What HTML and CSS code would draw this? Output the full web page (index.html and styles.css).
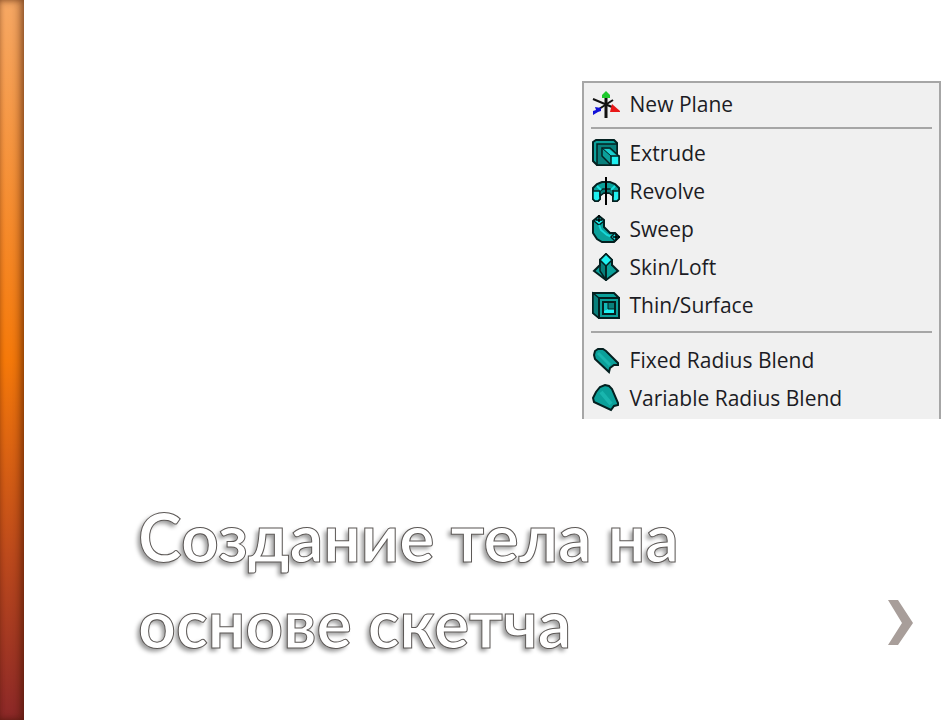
FILE: index.html
```html
<!DOCTYPE html>
<html lang="ru">
<head>
    <meta charset="UTF-8">
    <meta name="viewport" content="width=device-width, initial-scale=1.0">
    <title>Создание тела на основе скетча</title>
    <link rel="stylesheet" href="styles.css">
</head>
<body>
    <div class="side-bar"></div>
    <main class="slide">
        <div class="menu" lang="en">
            <div class="menu-group">
                <button class="menu-item">
                    <svg class="icon" viewBox="0 0 28 28" aria-hidden="true">
                        <path d="M14 5V28" stroke="#111" stroke-width="3"/>
                        <path d="M1 9L20 17M21 10L7 19" stroke="#111" stroke-width="2"/>
                        <path d="M14 1L18 5V8H10V5Z" fill="#1fc92d"/>
                        <path d="M20 14L28 21V22H18Z" fill="#e81818"/>
                        <path d="M3 17L9 18V21L6 22L1 25V21L4 20Z" fill="#1010d8"/>
                    </svg>
                    New Plane
                </button>
            </div>
            <div class="menu-group">
                <button class="menu-item">
                    <svg class="icon" viewBox="0 0 28 28" aria-hidden="true">
                        <path class="mid edge" d="M1 3L4 1H22L25 4V26H5L1 22Z"/>
                        <path class="dark" d="M5 5H25V26H5Z"/>
                        <path class="mid" d="M10 9H18L27 17V26H19L10 17Z"/>
                        <path d="M12 10H17L25 17H19Z" fill="#1ad0d0"/>
                        <path d="M10 9L19 17" stroke="#042020"/>
                        <path class="light" d="M19 17H27V26H19Z"/>
                    </svg>
                    Extrude
                </button>
                <button class="menu-item">
                    <svg class="icon" viewBox="0 0 28 28" aria-hidden="true">
                        <path class="mid edge" d="M1 15V11L5 7L10 5H18L23 7L27 11V22L25 24H21V18L18 16H10L8 18V22L6 24H3L1 22Z"/>
                        <path class="light" d="M1 14H8V22L6 24H3L1 22ZM21 14H27V22L25 24H21Z"/>
                        <path class="dark" d="M8 14L11 12H18L21 14V19L17 16H12L8 19Z"/>
                        <path d="M5 9L9 13M23 9L19 13" stroke="#19e0e0" stroke-width="2"/>
                        <path d="M14 0V28" stroke="#000" stroke-width="2"/>
                    </svg>
                    Revolve
                </button>
                <button class="menu-item">
                    <svg class="icon" viewBox="0 0 28 28" aria-hidden="true">
                        <path class="mid edge" d="M7 1L12 5V12L18 18H23L27 22L22 27H10L5 24L1 18V6Z"/>
                        <path class="light" d="M7 1L12 6L7 10L2 6Z"/>
                        <path d="M7 10L9 15L15 20L20 22" stroke="#16d8d8" fill="none" stroke-width="2"/>
                        <path class="light" d="M23 18L27 22L23 26L19 22Z"/>
                        <path d="M7 0V7M4 5H10M21 22H28M24 19V25" stroke="#000" stroke-width="1.5"/>
                    </svg>
                    Sweep
                </button>
                <button class="menu-item">
                    <svg class="icon" viewBox="0 0 28 28" aria-hidden="true">
                        <path class="mid edge" d="M14 1L8 7V12L2 18L14 27L26 18L20 12V7Z"/>
                        <path class="dark" d="M14 12V27L8 18V7Z" stroke="none"/>
                        <path class="light" d="M14 1L20 7L14 13L8 7Z"/>
                        <path d="M14 13V28M8 7V13M20 7V13" stroke="#042020" stroke-width="1.5"/>
                    </svg>
                    Skin/Loft
                </button>
                <button class="menu-item">
                    <svg class="icon" viewBox="0 0 28 28" aria-hidden="true">
                        <path class="mid edge" d="M1 2H22L27 7V27H7L1 22Z"/>
                        <path class="dark" d="M1 2L7 7V27L1 22Z"/>
                        <path class="mid edge" d="M7 7H27V27H7Z"/>
                        <path class="dark edge" d="M11 11H23V23H11Z"/>
                        <path d="M12 22V19L16 18H22V22Z" fill="#1ff0f0"/>
                        <path d="M12 12H16V18L12 20Z" fill="#13b8b8"/>
                        <path d="M16 12V18H22" stroke="#042020" fill="none"/>
                    </svg>
                    Thin/Surface
                </button>
            </div>
            <div class="menu-group">
                <button class="menu-item">
                    <svg class="icon" viewBox="0 0 28 28" aria-hidden="true">
                        <path class="mid edge" d="M2 9L3 5L6 3H11L14 5L26 17V19H22L18 22L17 26L3 13Z"/>
                        <path d="M6 7L18 19" stroke="#19b5ae" stroke-width="3"/>
                    </svg>
                    Fixed Radius Blend
                </button>
                <button class="menu-item">
                    <svg class="icon" viewBox="0 0 28 28" aria-hidden="true">
                        <path class="mid edge" d="M1 14L4 8L8 3L13 1L17 2L20 5L26 19V21L22 22L19 26L2 18Z"/>
                        <path d="M9 8L19 20" stroke="#19b5ae" stroke-width="4"/>
                    </svg>
                    Variable Radius Blend
                </button>
            </div>
        </div>
        <div class="title-row">
            <h1>Создание тела на основе скетча</h1>
            <svg class="chevron" viewBox="0 0 25 45" aria-hidden="true">
                <path d="M0 0H10L25 23L10 45H0L14 23Z" fill="#a89e9a"/>
            </svg>
        </div>
    </main>
</body>
</html>
```

FILE: styles.css
```css
body {
    margin: 0;
    min-height: 100vh;
    display: flex;
    background: #fff;
    font-family: "Open Sans", "Noto Sans", sans-serif;
}

.side-bar {
    width: 24px;
    flex-shrink: 0;
    background: linear-gradient(#f6a864, #f5790a 50%, #bd4a1c 77%, #8c2828);
    box-shadow: inset -4px 0 8px rgba(60, 20, 0, 0.5), inset 0 0 5px rgba(60, 20, 0, 0.3);
}

.slide {
    flex: 1;
    display: flex;
    flex-direction: column;
    justify-content: space-between;
    box-sizing: border-box;
    padding: 81px 0 54px;
}

/* menu */
.menu {
    align-self: flex-end;
    box-sizing: border-box;
    width: 39.2%;
    min-width: 300px;
    padding: 2px 7px;
    background: #f0f0f0;
    border: 2px solid #a6a6a6;
    border-bottom: none;
}

.menu-group + .menu-group {
    margin-top: 4px;
    padding-top: 5px;
    border-top: 2px solid #a6a6a6;
}

.menu-group:last-child {
    margin-top: 7px;
    padding-top: 8px;
}

.menu-item {
    display: flex;
    align-items: center;
    gap: 10px;
    width: 100%;
    height: 38px;
    padding: 0;
    border: none;
    background: none;
    font-family: "Open Sans", "Noto Sans", sans-serif;
    font-size: 21px;
    color: #1c1c24;
    text-align: left;
    white-space: nowrap;
    cursor: pointer;
}

.menu-item:hover {
    background: #e2e8f0;
}

.icon {
    width: 28px;
    height: 28px;
    margin-left: 1px;
    flex-shrink: 0;
}

.dark,
.mid,
.light {
    stroke: #042020;
    stroke-width: 1.5;
}

.dark {
    fill: #087f7b;
}

.mid {
    fill: #0ba09a;
}

.light {
    fill: #1ff0f0;
}

.edge {
    stroke-width: 2;
}

/* title */
.title-row {
    display: flex;
    align-items: flex-end;
    justify-content: space-between;
    padding: 0 28px 0 114px;
}

h1 {
    margin: 0;
    max-width: 600px;
    font-family: Lato, "Open Sans", sans-serif;
    font-size: 66px;
    line-height: 86px;
    font-weight: bold;
    color: #fff;
    -webkit-text-stroke: 1px #5c5856;
    text-shadow: -3px 3px 4px rgba(0, 0, 0, 0.4);
}

.chevron {
    width: 25px;
    height: 45px;
    margin-bottom: 21px;
    flex-shrink: 0;
}
```
